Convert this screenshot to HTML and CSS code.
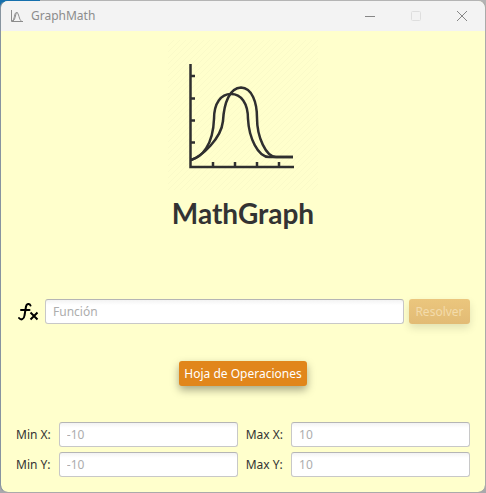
FILE: index.html
```html
<!DOCTYPE html>
<html lang="es">
<head>
<meta charset="utf-8">
<title>GraphMath</title>
<link rel="stylesheet" href="styles.css">
</head>
<body>
<div class="window">
  <header class="titlebar">
    <svg class="app-icon" viewBox="0 0 12 12" aria-hidden="true"><path d="M.5 0v11.5H12M1 11C4 10 3 2.500 5.500 2.500S8 10.500 10.500 11M2 11C5 9 4 2.500 6.500 2.500"/></svg>
    <span class="caption">GraphMath</span>
    <div class="window-buttons">
      <button class="window-button" aria-label="Minimizar"><svg viewBox="0 0 12 12"><path d="M1 6.500h10"/></svg></button>
      <button class="window-button faint" aria-label="Maximizar" disabled><svg viewBox="0 0 12 12"><rect x="1.500" y="1.500" width="9" height="9" rx="1"/></svg></button>
      <button class="window-button" aria-label="Cerrar"><svg viewBox="0 0 12 12"><path d="M1 1l10 10M11 1L1 11"/></svg></button>
    </div>
  </header>
  <main class="content">
    <svg class="logo" viewBox="0 0 150 150" aria-hidden="true">
      <defs>
        <pattern id="hatch" width="6" height="6" patternUnits="userSpaceOnUse"><path d="M-1 7L7 -1"/></pattern>
      </defs>
      <rect class="hatch" width="150" height="150" fill="url(#hatch)"/>
      <path class="axis" d="M22.500 24v103H126M22 36h5M22 58.500h5M22 80.500h5M22 102.500h5M45 127v-5M67 127v-5M89 127v-5M111 127v-5"/>
      <path class="curve" d="M23 120C34 117 45 105 46 79C46 63 53 54 63 54C73 54 80 63 80 79C81 98 90 117 101 117H125"/>
      <path class="curve" d="M23 120C34 116 53 99 55 81C56 62 62 48 73 47.500C84 48 89 62 89 78C89 97 98 117 108 117H125"/>
    </svg>
    <h1 class="title">MathGraph</h1>
    <form class="function-row">
      <label class="fx" for="funcion" aria-label="Función">
        <svg viewBox="0 0 24 20" aria-hidden="true">
          <path class="fx-f" d="M14.500 3.500C13.500 1 10.500 1.500 10 4.500L8.500 13.500C8 17.500 5 18.500 3 16M5 8h8.500"/>
          <path class="fx-x" d="M14.500 10.500l7 7M21.500 10.500l-7 7"/>
        </svg>
      </label>
      <input class="field" id="funcion" type="text" placeholder="Función">
      <button class="button" type="button" disabled>Resolver</button>
    </form>
    <button class="button sheet-button" type="button">Hoja de Operaciones</button>
    <form class="ranges">
      <label for="min-x">Min X:</label><input class="field" id="min-x" type="text" placeholder="-10">
      <label for="max-x">Max X:</label><input class="field" id="max-x" type="text" placeholder="10">
      <label for="min-y">Min Y:</label><input class="field" id="min-y" type="text" placeholder="-10">
      <label for="max-y">Max Y:</label><input class="field" id="max-y" type="text" placeholder="10">
    </form>
  </main>
</div>
</body>
</html>
```
FILE: styles.css
```css
* { box-sizing: border-box; }

body {
  margin: 0;
  background: linear-gradient(90deg, #1670ad 0 40px, #b4b4b4 40px) top / 100% 20px no-repeat, #a9a9ad;
  color: #333;
  font: 12px/16px "Noto Sans", "Open Sans", sans-serif;
}

.window {
  display: flex;
  flex-direction: column;
  min-height: 100vh;
  border: 1px solid #aaa;
  border-color: transparent #aaa #aaa #8794a0;
  border-radius: 8px;
  background: #ffffcc;
  background-clip: padding-box;
  overflow: hidden;
}

.titlebar {
  display: flex;
  align-items: center;
  height: 30px;
  padding-left: 10px;
  background: #f3f3f3;
  color: #8c8c8c;
}

.app-icon {
  width: 12px;
  height: 12px;
  margin-right: 8px;
  fill: none;
  stroke: #8c8c8c;
}

.window-buttons { display: flex; margin-left: auto; }

.window-button {
  display: grid;
  place-items: center;
  width: 46px;
  height: 30px;
  padding: 0;
  border: 0;
  background: none;
}

.window-button svg {
  width: 12px;
  height: 12px;
  fill: none;
  stroke: #868686;
}

.window-button.faint svg { stroke: #dedede; }

.content {
  display: flex;
  flex: 1;
  flex-direction: column;
  align-items: center;
  padding: 9px 15px 15px;
}

.logo { width: 150px; height: 150px; fill: none; stroke: #2f2f2f; }
.logo .hatch { stroke: none; }
.logo pattern path { stroke: #fafac8; }
.axis,
.curve { stroke-width: 2.500; }

.title {
  margin: 4px 0 0;
  font: bold 28px/38px Lato, "Noto Sans", sans-serif;
}

.function-row {
  display: flex;
  align-items: center;
  gap: 5px;
  width: 100%;
  margin-top: 67px;
}

.function-row .field { flex: 1; }

.fx { display: flex; }
.fx svg { width: 24px; height: 20px; fill: none; stroke: #000; }
.fx-f { stroke-width: 2; stroke-linecap: round; }
.fx-x { stroke-width: 2; }

.field {
  width: 100%;
  min-width: 0;
  height: 25px;
  padding: 0 7px;
  border: 1px solid #c8c8c8;
  border-top-color: #b5b5b5;
  border-radius: 3px;
  background: linear-gradient(#f3f3f3, #fff 5px);
  color: #333;
  font: inherit;
}

.field::placeholder { color: #adadad; opacity: 1; }

.button {
  min-width: 61px;
  height: 25px;
  padding: 0 5px;
  border: 0;
  border-radius: 3px;
  background: #e1861b;
  box-shadow: 0 4px 8px rgb(0 0 0 / 35%);
  color: #fff;
  font: inherit;
  white-space: nowrap;
}

.button:disabled {
  background: linear-gradient(#ebc67d, #e2bb75);
  box-shadow: 0 4px 8px rgb(0 0 0 / 12%);
  color: #f3dbaa;
}

.sheet-button { margin-top: 37px; }

.ranges {
  display: grid;
  grid-template-columns: auto 1fr auto 1fr;
  align-items: center;
  gap: 5px 8px;
  width: 100%;
  margin-top: auto;
}
```
